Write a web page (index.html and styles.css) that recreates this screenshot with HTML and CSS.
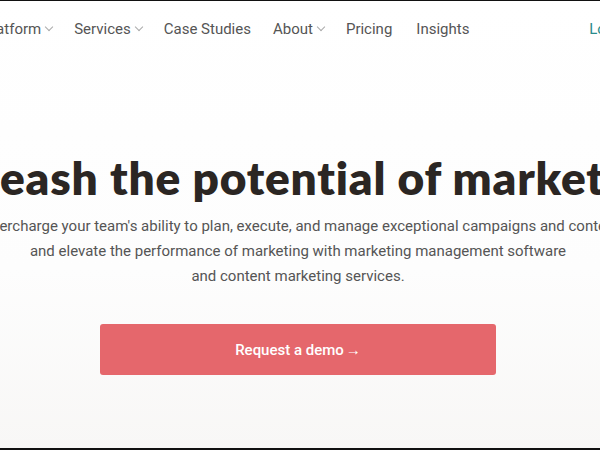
FILE: index.html
```html
<!DOCTYPE html>
<html lang="en">
<head>
  <meta charset="UTF-8" />
  <meta name="viewport" content="width=device-width, initial-scale=1.0" />
  <title>Marketing Platform</title>
  <link rel="stylesheet" href="styles.css">
</head>
<body>
  <div class="frame">
    <header class="topbar">
      <nav class="nav">
        <a class="nav-item" href="#">Platform <span class="chev"></span></a>
        <a class="nav-item" href="#">Services <span class="chev"></span></a>
        <a class="nav-item" href="#">Case Studies</a>
        <a class="nav-item" href="#">About <span class="chev"></span></a>
        <a class="nav-item" href="#">Pricing</a>
        <a class="nav-item" href="#">Insights</a>
      </nav>
      <a class="login" href="#">Log in</a>
    </header>

    <section class="hero">
      <h1 class="headline">Unleash the potential of marketing</h1>
      <p class="lede">
        Supercharge your team's ability to plan, execute, and manage exceptional campaigns and content,<br>
        and elevate the performance of marketing with marketing management software<br>
        and content marketing services.
      </p>
      <a class="cta" href="#">Request a demo <span class="arrow">&rarr;</span></a>
    </section>
  </div>
</body>
</html>
```

FILE: styles.css
```css
html, body {
  margin: 0;
  padding: 0;
}
body {
  font-family: Roboto, "Liberation Sans", sans-serif;
  background: #fff;
  overflow: hidden;
}
.frame {
  height: 447px;
  border-top: 1px solid #111;
  border-bottom: 2px solid #111;
  background: linear-gradient(#fff 0%, #fdfdfd 60%, #f8f7f6 100%);
  overflow: hidden;
}
.topbar {
  display: flex;
  align-items: center;
  height: 56px;
}
.nav {
  display: flex;
  align-items: center;
  gap: 22px;
  margin-left: -17px;
  white-space: nowrap;
}
.nav-item {
  color: #555;
  text-decoration: none;
  font-size: 15px;
  display: flex;
  align-items: center;
  gap: 5px;
}
.nav-item:last-child {
  margin-left: 2px;
}
.chev {
  width: 5px;
  height: 5px;
  border-right: 1px solid #aaa;
  border-bottom: 1px solid #aaa;
  transform: rotate(45deg);
  margin-top: -4px;
}
.login {
  margin-left: auto;
  margin-right: -30px;
  color: #2a8c8c;
  text-decoration: none;
  font-size: 15px;
  white-space: nowrap;
}
.hero {
  display: flex;
  flex-direction: column;
  align-items: center;
  margin: 0 -200px 0 -204px;
  padding-top: 93px;
}
.headline {
  margin: 0;
  font-family: Lato, sans-serif;
  font-weight: 800;
  font-size: 46px;
  line-height: 55px;
  letter-spacing: 0.8px;
  color: #2b2623;
  white-space: nowrap;
}
.lede {
  margin: 9px 0 0;
  text-align: center;
  font-size: 15px;
  line-height: 25px;
  color: #555;
  white-space: nowrap;
}
.cta {
  margin-top: 35px;
  width: 396px;
  height: 51px;
  border-radius: 3px;
  background: #e5676c;
  color: #fff;
  text-decoration: none;
  font-size: 15px;
  font-weight: 500;
  display: flex;
  align-items: center;
  justify-content: center;
  gap: 2px;
}
```
